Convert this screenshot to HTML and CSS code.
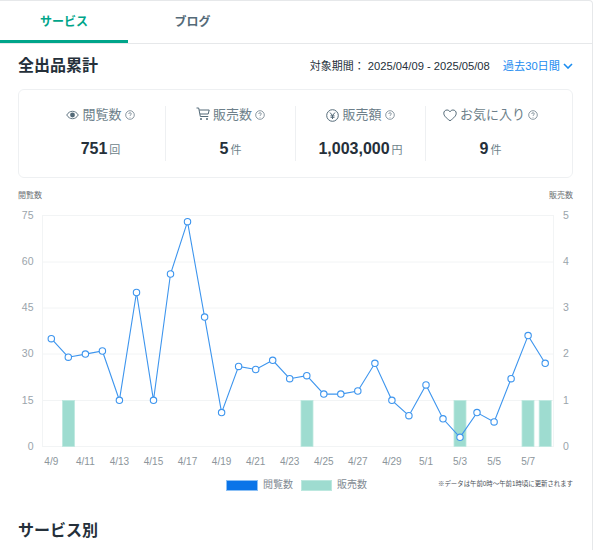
FILE: index.html
```html
<!DOCTYPE html>
<html lang="ja">
<head>
<meta charset="utf-8">
<title>全出品累計</title>
<link rel="stylesheet" href="styles.css">
</head>
<body>
<div class="page">
  <nav class="tabs">
    <div class="tab active">サービス</div>
    <div class="tab">ブログ</div>
  </nav>
  <main class="content">
    <header class="head">
      <h2 class="title">全出品累計</h2>
      <div class="period">
        <span class="period-label">対象期間：</span>
        <span class="period-text">2025/04/09 - 2025/05/08</span>
        <span class="period-link">過去30日間
          <svg class="chev" viewBox="0 0 10 6" width="10" height="6"><path d="M1 1l4 4 4-4" fill="none" stroke="#1a8cf0" stroke-width="1.6"/></svg>
        </span>
      </div>
    </header>
    <section class="card">
      <div class="stat">
        <div class="label">
          <svg class="ico" width="13" height="12" viewBox="0 0 14 12"><path d="M.8 6C2.3 3.4 4.5 2 7 2s4.700 1.400 6.200 4C11.700 8.600 9.500 10 7 10S2.300 8.600.8 6z" fill="none" stroke="#546a78" stroke-width="1"/><circle cx="7" cy="6" r="2.600" fill="#546a78"/></svg>
          閲覧数
          <svg class="help" width="10" height="10" viewBox="0 0 10 10"><circle cx="5" cy="5" r="4.300" fill="none" stroke="#6d7f8a" stroke-width=".8"/><path d="M3.700 4c0-.8.6-1.300 1.300-1.300s1.300.5 1.300 1.200c0 1-1.300 1-1.300 2M5 7v.6" fill="none" stroke="#6d7f8a" stroke-width=".8"/></svg>
        </div>
        <div class="value">751<small>回</small></div>
      </div>
      <div class="stat">
        <div class="label">
          <svg class="ico cart" width="14" height="14" viewBox="0 0 14 14"><path d="M.5 1h2.200l1.600 8.500h8M3.200 3h10l-1 4H4" fill="none" stroke="#546a78" stroke-width="1"/><circle cx="5" cy="12" r="1" fill="#546a78"/><circle cx="11" cy="12" r="1" fill="#546a78"/></svg>
          販売数
          <svg class="help" width="10" height="10" viewBox="0 0 10 10"><circle cx="5" cy="5" r="4.300" fill="none" stroke="#6d7f8a" stroke-width=".8"/><path d="M3.700 4c0-.8.6-1.300 1.300-1.300s1.300.5 1.300 1.200c0 1-1.300 1-1.300 2M5 7v.6" fill="none" stroke="#6d7f8a" stroke-width=".8"/></svg>
        </div>
        <div class="value">5<small>件</small></div>
      </div>
      <div class="stat">
        <div class="label">
          <svg class="ico" width="13" height="13" viewBox="0 0 13 13"><circle cx="6.500" cy="6.500" r="5.800" fill="none" stroke="#546a78" stroke-width="1"/><path d="M4 3.500l2.500 3 2.500-3M6.500 6.500V10M4.500 6.800h4M4.500 8.300h4" fill="none" stroke="#546a78" stroke-width="1"/></svg>
          販売額
          <svg class="help" width="10" height="10" viewBox="0 0 10 10"><circle cx="5" cy="5" r="4.300" fill="none" stroke="#6d7f8a" stroke-width=".8"/><path d="M3.700 4c0-.8.6-1.300 1.300-1.300s1.300.5 1.300 1.200c0 1-1.300 1-1.300 2M5 7v.6" fill="none" stroke="#6d7f8a" stroke-width=".8"/></svg>
        </div>
        <div class="value">1,003,000<small>円</small></div>
      </div>
      <div class="stat">
        <div class="label">
          <svg class="ico" width="14" height="13" viewBox="0 0 14 13"><path d="M7 11.800C3 8.800.8 6.800.8 4.200.8 2.400 2.200 1 4 1c1.300 0 2.400.7 3 1.800C7.600 1.700 8.700 1 10 1c1.800 0 3.200 1.400 3.200 3.200 0 2.600-2.200 4.600-6.200 7.600z" fill="none" stroke="#546a78" stroke-width="1"/></svg>
          お気に入り
          <svg class="help" width="10" height="10" viewBox="0 0 10 10"><circle cx="5" cy="5" r="4.300" fill="none" stroke="#6d7f8a" stroke-width=".8"/><path d="M3.700 4c0-.8.6-1.300 1.300-1.300s1.300.5 1.300 1.200c0 1-1.300 1-1.300 2M5 7v.6" fill="none" stroke="#6d7f8a" stroke-width=".8"/></svg>
        </div>
        <div class="value">9<small>件</small></div>
      </div>
    </section>
    <section class="chart">
      <div class="axis-titles"><span>閲覧数</span><span>販売数</span></div>
      <svg class="plot" viewBox="18 205 555 266" width="555" height="266">
        <g class="grid">
          <path d="M42.500 215.500H553.500M42.500 262H553.500M42.500 308H553.500M42.500 354H553.500M42.500 400.500H553.500M42.500 446.500H553.500M42.500 215V447M553.500 215V447"/>
        </g>
        <g class="ticks-left">
          <text x="33.500" y="218.500">75</text><text x="33.500" y="265">60</text><text x="33.500" y="311">45</text><text x="33.500" y="357">30</text><text x="33.500" y="403.500">15</text><text x="33.500" y="449.500">0</text>
        </g>
        <g class="ticks-right">
          <text x="566" y="218.500">5</text><text x="566" y="265">4</text><text x="566" y="311">3</text><text x="566" y="357">2</text><text x="566" y="403.500">1</text><text x="566" y="449.500">0</text>
        </g>
        <g class="bars">
          <rect x="62.500" y="400.500" width="12" height="46"/>
          <rect x="301" y="400.500" width="12" height="46"/>
          <rect x="454" y="400.500" width="12" height="46"/>
          <rect x="522" y="400.500" width="12" height="46"/>
          <rect x="539.200" y="400.500" width="12" height="46"/>
        </g>
        <polyline class="line" points="51.300,338.700 68.300,357.200 85.400,354.100 102.400,351 119.400,400.300 136.500,292.500 153.500,400.300 170.500,274 187.500,221.700 204.600,317.100 221.600,412.600 238.600,366.400 255.700,369.500 272.700,360.300 289.700,378.700 306.800,375.700 323.800,394.100 340.800,394.100 357.800,391 374.900,363.300 391.900,400.300 408.900,415.700 426,384.900 443,418.800 460,437.300 477,412.600 494.100,421.900 511.100,378.700 528.100,335.600 545.200,363.300"/>
        <g class="dots">
          <circle cx="51.300" cy="338.700" r="3.200"/><circle cx="68.300" cy="357.200" r="3.200"/><circle cx="85.400" cy="354.100" r="3.200"/><circle cx="102.400" cy="351" r="3.200"/><circle cx="119.400" cy="400.300" r="3.200"/><circle cx="136.500" cy="292.500" r="3.200"/><circle cx="153.500" cy="400.300" r="3.200"/><circle cx="170.500" cy="274" r="3.200"/><circle cx="187.500" cy="221.700" r="3.200"/><circle cx="204.600" cy="317.100" r="3.200"/><circle cx="221.600" cy="412.600" r="3.200"/><circle cx="238.600" cy="366.400" r="3.200"/><circle cx="255.700" cy="369.500" r="3.200"/><circle cx="272.700" cy="360.300" r="3.200"/><circle cx="289.700" cy="378.700" r="3.200"/><circle cx="306.800" cy="375.700" r="3.200"/><circle cx="323.800" cy="394.100" r="3.200"/><circle cx="340.800" cy="394.100" r="3.200"/><circle cx="357.800" cy="391" r="3.200"/><circle cx="374.900" cy="363.300" r="3.200"/><circle cx="391.900" cy="400.300" r="3.200"/><circle cx="408.900" cy="415.700" r="3.200"/><circle cx="426" cy="384.900" r="3.200"/><circle cx="443" cy="418.800" r="3.200"/><circle cx="460" cy="437.300" r="3.200"/><circle cx="477" cy="412.600" r="3.200"/><circle cx="494.100" cy="421.900" r="3.200"/><circle cx="511.100" cy="378.700" r="3.200"/><circle cx="528.100" cy="335.600" r="3.200"/><circle cx="545.200" cy="363.300" r="3.200"/>
        </g>
        <g class="ticks-x">
          <text x="51.300" y="465">4/9</text><text x="85.400" y="465">4/11</text><text x="119.400" y="465">4/13</text><text x="153.500" y="465">4/15</text><text x="187.500" y="465">4/17</text><text x="221.600" y="465">4/19</text><text x="255.700" y="465">4/21</text><text x="289.700" y="465">4/23</text><text x="323.800" y="465">4/25</text><text x="357.800" y="465">4/27</text><text x="391.900" y="465">4/29</text><text x="426" y="465">5/1</text><text x="460" y="465">5/3</text><text x="494.100" y="465">5/5</text><text x="528.100" y="465">5/7</text>
        </g>
      </svg>
      <div class="legend">
        <div class="legend-items">
          <span class="swatch blue"></span><span class="legend-label">閲覧数</span>
          <span class="swatch teal"></span><span class="legend-label">販売数</span>
        </div>
        <span class="note">※データは午前0時〜午前1時頃に更新されます</span>
      </div>
    </section>
    <h2 class="title section">サービス別</h2>
  </main>
</div>
</body>
</html>
```
FILE: styles.css
```css
* { box-sizing: border-box; }
html, body { margin: 0; padding: 0; background: #fff; }
body {
  font-family: "Liberation Sans", "Noto Sans CJK JP", sans-serif;
  color: #25303a;
  overflow: hidden;
}
.page {
  width: 593px;
  height: 550px;
  border-top: 1px solid #e6e8ea;
  border-right: 1px solid #e6e8ea;
  border-top-right-radius: 4px;
  overflow: hidden;
}
.tabs {
  display: flex;
  height: 43px;
  border-bottom: 1px solid #e6e8ea;
}
.tab {
  width: 128px;
  height: 42px;
  padding-top: 13px;
  padding-left: 1px;
  font-size: 12px;
  line-height: 16px;
  font-weight: 700;
  text-align: center;
  color: #546a78;
}
.tab.active {
  color: #00a58a;
  border-bottom: 3px solid #00a58a;
  padding-left: 0;
}
.content { padding: 0 19px 0 18px; }
.head {
  display: flex;
  justify-content: space-between;
  align-items: center;
  height: 45px;
  padding-bottom: 2px;
}
.title {
  margin: 0;
  font-size: 16px;
  line-height: 24px;
  font-weight: 700;
  color: #25303a;
}
.period { display: flex; align-items: center; font-size: 11.2px; line-height: 16px; }
.period-label { color: #25303a; font-size: 11px; margin-right: 3px; }
.period-text { color: #25303a; white-space: pre; }
.period-link { margin-left: 13px; color: #1a8cf0; display: flex; align-items: center; gap: 3px; }
.chev { display: block; }
.card {
  display: flex;
  width: 555px;
  height: 89px;
  padding: 16px 17px;
  border: 1px solid #eef0f2;
  border-radius: 6px;
}
.stat {
  flex: 1 1 0;
  text-align: center;
  border-right: 1px solid #eef0f2;
}
.stat:last-child { border-right: 0; }
.label {
  display: flex;
  justify-content: center;
  align-items: center;
  gap: 3px;
  height: 18px;
  font-size: 13px;
  line-height: 18px;
  color: #6d7f8a;
}
.ico, .help { flex: none; display: block; }
.cart { margin-top: -3px; }
.value {
  margin-top: 14px;
  font-size: 16px;
  line-height: 22px;
  font-weight: 700;
  color: #25303a;
}
.value small {
  margin-left: 2px;
  font-size: 11px;
  font-weight: 400;
  color: #6d7f8a;
}
.chart { margin-top: 12px; }
.axis-titles {
  display: flex;
  justify-content: space-between;
  height: 15px;
  font-size: 8px;
  line-height: 12px;
  color: #6b6f73;
}
.plot { display: block; }
.grid path { stroke: #f2f4f5; stroke-width: 1; fill: none; }
.ticks-left text { font-size: 10.5px; fill: #9aa4ab; text-anchor: end; }
.ticks-right text { font-size: 10.5px; fill: #9aa4ab; text-anchor: middle; }
.ticks-x text { font-size: 10px; fill: #8c959b; text-anchor: middle; }
.bars rect { fill: #9edcd0; stroke: #bce8df; stroke-width: .8; }
.line { fill: none; stroke: #3d95ee; stroke-width: 1.1; }
.dots circle { fill: #fff; stroke: #3d95ee; stroke-width: 1.1; }
.legend {
  display: flex;
  justify-content: space-between;
  align-items: center;
  margin-top: 7px;
  padding-left: 208px;
  height: 14px;
}
.legend-items { display: flex; align-items: center; }
.swatch { display: block; width: 32px; height: 11px; }
.swatch.blue { background: #0a74e8; border: 1px solid #8cc0f5; }
.swatch.teal { background: #9edcd0; border: 1px solid #bce8df; margin-left: 8px; width: 31px; }
.legend-label { margin-left: 5px; font-size: 10px; line-height: 14px; color: #7f8a92; }
.note { font-size: 6.4px; line-height: 10px; color: #4a5058; margin-top: -2px; }
.section { margin-top: 27px; }
```
